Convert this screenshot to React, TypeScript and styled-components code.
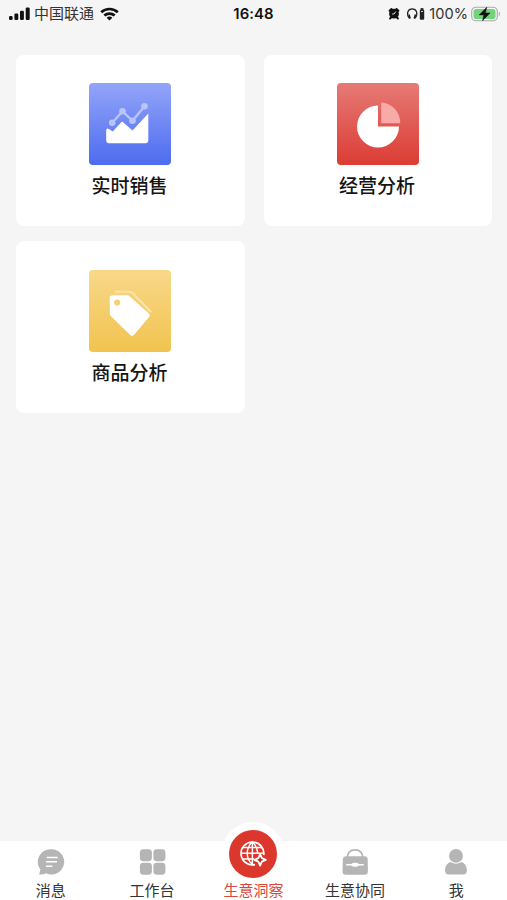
import React from 'react';
import styled, { createGlobalStyle } from 'styled-components';

const GlobalStyle = createGlobalStyle`
  * { box-sizing: border-box; }
  body {
    margin: 0;
    background: #f5f5f5;
    font-family: "Liberation Sans", "Noto Sans CJK SC", sans-serif;
  }
  svg { display: block; flex: none; }
`;

const Screen = styled.div`
  display: flex;
  flex-direction: column;
  height: 100vh;
  background: #f5f5f5;
  overflow: hidden;
`;

const StatusBar = styled.header`
  display: grid;
  grid-template-columns: 1fr auto 1fr;
  align-items: center;
  height: 27px;
  padding: 0 6px 0 9px;
  color: #111;
`;

const StatusGroup = styled.div<{ $end?: boolean }>`
  display: flex;
  align-items: center;
  justify-content: ${(p) => (p.$end ? 'flex-end' : 'flex-start')};
`;

const Carrier = styled.span`
  margin: -1px 6px 0 3px;
  font: 400 15px/20px "Noto Sans CJK SC", sans-serif;
  color: #333;
`;

const Clock = styled.span`
  padding-right: 3px;
  font: 600 14.9px/20px Inter, sans-serif;
  letter-spacing: 0.1px;
`;

const Percent = styled.span`
  margin: 0 3px 0 3px;
  font: 400 14.6px/20px Inter, sans-serif;
  color: #333;
`;

const CardGrid = styled.main`
  flex: 1;
  display: grid;
  grid-template-columns: 1fr 1fr;
  grid-auto-rows: 171.5px;
  gap: 15px 19px;
  padding: 27.5px 15px 0 16px;
`;

const Card = styled.section`
  display: flex;
  flex-direction: column;
  align-items: center;
  padding-top: 28.5px;
  background: #fff;
  border-radius: 8px;
`;

const IconTile = styled.div<{ $from: string; $to: string }>`
  width: 82px;
  height: 82px;
  border-radius: 4px;
  background: linear-gradient(180deg, ${(p) => p.$from}, ${(p) => p.$to});
`;

const CardLabel = styled.span`
  margin-top: 6px;
  padding-right: 1.5px;
  font: 500 19px/28px "Noto Sans CJK SC", sans-serif;
  color: #151515;
`;

const TabBar = styled.nav`
  display: grid;
  grid-template-columns: repeat(5, 1fr);
  grid-template-rows: 59px;
  height: 59px;
  background: #fff;
`;

const Tab = styled.a<{ $active?: boolean }>`
  display: flex;
  flex-direction: column;
  align-items: center;
  justify-content: flex-end;
  color: ${(p) => (p.$active ? '#d94740' : '#333')};
`;

const TabLabel = styled.span`
  margin-top: 4px;
  font: 400 15px/20px "Noto Sans CJK SC", sans-serif;
`;

const ActiveBadge = styled.span`
  display: flex;
  flex: none;
  align-items: center;
  justify-content: center;
  width: 48px;
  height: 48px;
  margin-bottom: -2px;
  border-radius: 50%;
  background: #dc372d;
  box-shadow: 0 0 0 8px #fff;
`;

const ActiveLabel = styled(TabLabel)`
  z-index: 1;
`;

const SignalIcon = () => (
  <svg width="22" height="14" viewBox="0 0 22 14" fill="#111">
    <rect x="0" y="9" width="3.6" height="4" rx="1.2" />
    <rect x="5.4" y="6.5" width="3.9" height="6.5" rx="1.2" />
    <rect x="11" y="3.8" width="3.9" height="9.2" rx="1.2" />
    <rect x="16.7" y="0.5" width="4" height="12.5" rx="1.2" />
  </svg>
);

const WifiIcon = () => (
  <svg width="19" height="14" viewBox="0 0 19 14" fill="none" stroke="#111" strokeWidth="2.7">
    <path d="M1.2 5.3C5.9.9 13.1.9 17.8 5.3" />
    <path d="M4.3 8.6c3-2.7 7.4-2.7 10.4 0" />
    <path d="M6.6 10.7c1.8-1.5 4-1.5 5.8 0L9.5 13.6z" fill="#111" stroke="none" />
  </svg>
);

const AlarmIcon = () => (
  <svg width="12" height="13" viewBox="0 0 12 13">
    <path d="M1.6 3.8 3.5 2M10.4 3.8 8.5 2M3 10.5l-.9 1M9 10.5l.9 1" stroke="#111" strokeWidth="2" strokeLinecap="round" />
    <circle cx="6" cy="6.7" r="4.9" fill="#111" />
    <path d="M7.7 4.6 6.1 7H4.1" fill="none" stroke="#eee" strokeWidth=".9" />
  </svg>
);

const HeadphoneIcon = () => (
  <svg width="20" height="14" viewBox="0 0 20 14">
    <path d="M3.2 11.2C-.2 6.4 2.1 1.8 6.2 1.8s6.4 4.6 3 9.4" fill="none" stroke="#222" strokeWidth="1.2" />
    <path d="m2.1 7.7 1.6-.5 1.2 4-1.6.7zM10.3 7.7l-1.6-.5-1.2 4 1.6.7z" fill="#222" />
    <rect x="14.5" y="1" width="3" height="2" rx=".7" fill="#333" />
    <rect x="13.8" y="2.6" width="4.4" height="10.2" rx="1.2" fill="#222" />
    <path d="M15 4.5h2" stroke="#ccc" strokeWidth="1" />
  </svg>
);

const BatteryIcon = () => (
  <svg width="30" height="16" viewBox="0 0 30 16">
    <rect x=".7" y="1.2" width="25.6" height="13.6" rx="4.4" fill="#f5f5f5" stroke="#aaa" strokeWidth="1.1" />
    <rect x="2.5" y="3" width="22" height="10" rx="2.8" fill="#71d47c" />
    <path d="M27.8 5.8c1.5.5 1.5 3.9 0 4.4z" fill="#aaa" />
    <path d="M15.8 1.2 8.2 8.9h4.7l-1.4 5.9 7.6-7.9h-4.7z" fill="#111" stroke="#111" strokeWidth=".5" />
  </svg>
);

const SalesIcon = () => (
  <svg width="82" height="82" viewBox="0 0 82 82">
    <g stroke="#b9c4fc" fill="#b9c4fc">
      <path d="m23.2 39.8 10.3-11.4 10 9.4 12-14.6" fill="none" strokeWidth="2.3" />
      <g stroke="none">
        <circle cx="23.2" cy="39.8" r="3.3" />
        <circle cx="33.5" cy="28.2" r="3.3" />
        <circle cx="43.5" cy="37.8" r="3.3" />
        <circle cx="55.5" cy="23.3" r="3.3" />
      </g>
    </g>
    <path d="M17.2 47.5c0-1.8 1.2-2.7 2.7-1.5l3.8 2.6 8.3-9.2c.8-.8 1.6-.8 2.4 0l9.1 8 15.8-16.9v26.7c0 2-1 3-3 3H20.2c-2 0-3-1-3-3z" fill="#fff" />
  </svg>
);

const PieIcon = () => (
  <svg width="82" height="82" viewBox="0 0 82 82">
    <path d="M41 22.5V43.5H62A21 21 0 1 1 41 22.5Z" fill="#fff" />
    <path d="M44.2 19.5A20 20 0 0 1 63.2 40.3H44.2Z" fill="#f7aaa8" />
  </svg>
);

const TagIcon = () => (
  <svg width="82" height="82" viewBox="0 0 82 82">
    <path d="M25.8 21.8h14.5c1.5 0 2.4.4 3.5 1.5l18.5 19" fill="none" stroke="#fbe4a7" strokeWidth="2" />
    <path fillRule="evenodd" d="M23.6 25.2h13.7c1.6 0 2.7.4 3.8 1.5l18.5 16.5c1.5 1.4 1.6 2.7.3 4.1L45.1 64.8c-1.3 1.4-2.5 1.4-3.9.1L22.5 46.8c-1.2-1.1-1.7-2.3-1.7-3.9V28c0-1.8 1-2.8 2.8-2.8ZM28.2 29.4a3.1 3.1 0 1 0 0 6.2 3.1 3.1 0 0 0 0-6.2Z" fill="#fff" />
  </svg>
);

const MessageIcon = () => (
  <svg width="28" height="28" viewBox="0 0 28 28">
    <path d="M14.5 1.2a12.7 12.7 0 1 1-5.6 24.1c-2.1 1.2-4.5 1.4-6.8 1.3l1.3-5.1A12.7 12.7 0 0 1 14.5 1.2Z" fill="#b5b5b5" />
    <path d="M9.7 9.4h11M9 13.8h11M9 18.2h6.4" stroke="#fff" strokeWidth="1.5" />
  </svg>
);

const WorkbenchIcon = () => (
  <svg width="28" height="28" viewBox="0 0 28 28" fill="#b5b5b5">
    <rect x="1.9" y="1.2" width="12" height="12" rx="3.4" />
    <rect x="15.4" y="1.2" width="12" height="12" rx="3.4" />
    <rect x="1.9" y="14.7" width="12" height="12" rx="3.4" />
    <rect x="15.4" y="14.7" width="12" height="12" rx="3.4" />
  </svg>
);

const GlobeIcon = () => (
  <svg width="30" height="30" viewBox="0 0 30 30" fill="none" stroke="#fff" strokeWidth="1.7">
    <path d="M25.7 16.2A11.4 11.4 0 1 0 17 25.6" />
    <path d="M17 25.6h-2.6c-6.9-6.4-6.9-16.2 0-22.8 3.5 3.5 5.3 7.5 5.3 12.2M14.4 2.8v22.8M4.8 20h11.3M4.8 8.5H24M3 14.2h22.8" strokeWidth="1.4" />
    <path d="m22.1 15.2 1.7 4 4 1.7-4 1.7-1.7 4-1.7-4-4-1.7 4-1.7z" fill="#a92c25" strokeWidth="1.8" strokeLinejoin="round" />
  </svg>
);

const BagIcon = () => (
  <svg width="28" height="28" viewBox="0 0 28 28">
    <path d="M6.2 10.5C6.3 4.7 9.4 1.8 14 1.8s7.8 2.9 7.9 8.7" fill="none" stroke="#b5b5b5" strokeWidth="1.7" />
    <path d="M5.2 8.2h18.2c2 0 3.2 1 3.3 3l.2 12c.1 2.4-1.1 3.6-3.5 3.6H5c-2.4 0-3.6-1.2-3.5-3.6l.4-12c.1-2 1.3-3 3.3-3Z" fill="#b5b5b5" />
    <path d="M5.2 16.1h5c1.9-1.9 6-1.9 7.9 0h4.7v1.3h-4.7c-1.9 1.9-6 1.9-7.9 0h-5z" fill="#fff" />
  </svg>
);

const PersonIcon = () => (
  <svg width="28" height="28" viewBox="0 0 28 28" fill="#b5b5b5">
    <circle cx="14" cy="7.9" r="6.9" />
    <path d="M3.1 22.6c0-4.5 2.2-7.8 5.7-8.6 3.4 2.3 7 2.3 10.4 0 3.5.8 5.7 4.1 5.7 8.6 0 2.8-1.1 4-3.9 4H7c-2.8 0-3.9-1.2-3.9-4Z" />
  </svg>
);

const cards = [
  { label: '实时销售', from: '#93a4f8', to: '#4d6cef', icon: <SalesIcon /> },
  { label: '经营分析', from: '#e67a75', to: '#dc3c34', icon: <PieIcon /> },
  { label: '商品分析', from: '#f8d889', to: '#f1c34f', icon: <TagIcon /> },
];

const DeviceIcons = styled.span`
  display: flex;
  align-items: center;
  gap: 6px;
`;

export default function App() {
  return (
    <Screen>
      <GlobalStyle />
      <StatusBar>
        <StatusGroup>
          <SignalIcon />
          <Carrier>中国联通</Carrier>
          <WifiIcon />
        </StatusGroup>
        <Clock>16:48</Clock>
        <StatusGroup $end>
          <DeviceIcons>
            <AlarmIcon />
            <HeadphoneIcon />
          </DeviceIcons>
          <Percent>100%</Percent>
          <BatteryIcon />
        </StatusGroup>
      </StatusBar>
      <CardGrid>
        {cards.map((card) => (
          <Card key={card.label}>
            <IconTile $from={card.from} $to={card.to}>{card.icon}</IconTile>
            <CardLabel>{card.label}</CardLabel>
          </Card>
        ))}
      </CardGrid>
      <TabBar>
        <Tab><MessageIcon /><TabLabel>消息</TabLabel></Tab>
        <Tab><WorkbenchIcon /><TabLabel>工作台</TabLabel></Tab>
        <Tab $active>
          <ActiveBadge><GlobeIcon /></ActiveBadge>
          <ActiveLabel>生意洞察</ActiveLabel>
        </Tab>
        <Tab><BagIcon /><TabLabel>生意协同</TabLabel></Tab>
        <Tab><PersonIcon /><TabLabel>我</TabLabel></Tab>
      </TabBar>
    </Screen>
  );
}
